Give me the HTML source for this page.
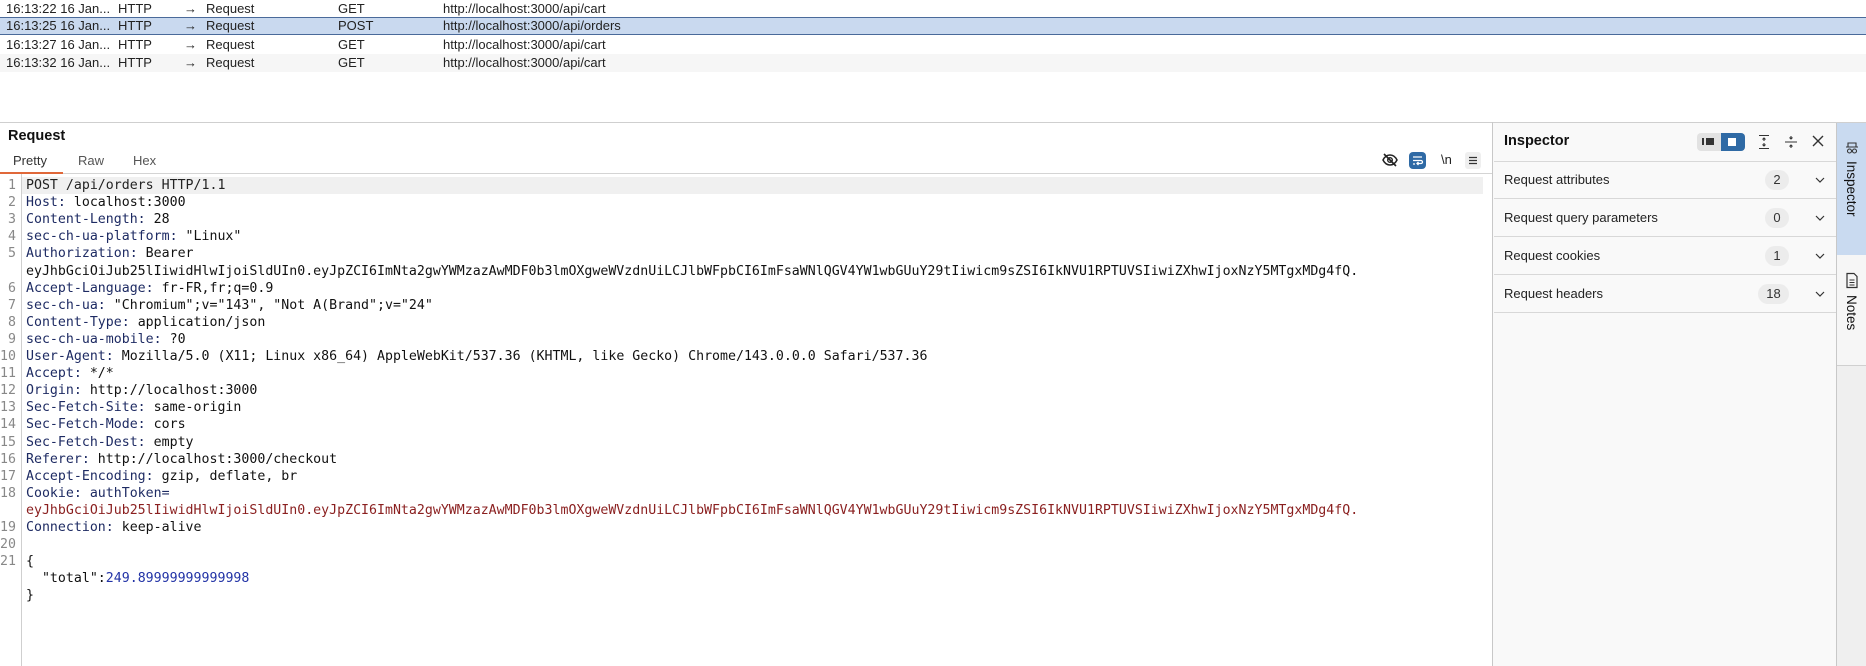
<!DOCTYPE html>
<html><head><meta charset="utf-8"><style>
*{box-sizing:border-box;margin:0;padding:0}
body{width:1866px;height:666px;overflow:hidden;background:#fff;font-family:"Liberation Sans",Arial,sans-serif;position:relative;color:#222}
.row{position:absolute;left:0;width:1866px;height:18px;font-size:13px;line-height:18px}
.row span{position:absolute;top:0}
.sel{background:#c9d9ef;border-top:1px solid #4a6a9a;border-bottom:1px solid #4a6a9a;line-height:16px}
.sel span{top:0}
.code{position:absolute;left:0;top:177px;font-family:"DejaVu Sans Mono","Liberation Mono",monospace;font-size:13.25px;line-height:17.1px;white-space:pre}
.ln{position:absolute;left:0;width:16px;text-align:right;color:#888}
.tx{position:absolute;left:26px}
.h{color:#1e2b63}.r{color:#8a1f1f}.n{color:#2233a6}
.irow{position:absolute;left:1494px;width:343px;height:38px;border-bottom:1px solid #d8d8d8;font-size:13px;line-height:37px}
.irow .t{position:absolute;left:10px}
.badge{position:absolute;left:271px;top:9px;width:24px;height:20px;border-radius:10px;background:#ececec;text-align:center;line-height:20px;font-size:13px;color:#333}
.chev{position:absolute;left:320px;top:10px}
</style></head><body>
<div class="row" style="top:0"><span style="left:6px">16:13:22 16 Jan...</span><span style="left:118px">HTTP</span><span style="left:184px">&#8594;</span><span style="left:206px">Request</span><span style="left:338px">GET</span><span style="left:443px">http://localhost:3000/api/cart</span></div>
<div class="row sel" style="top:17px"><span style="left:6px">16:13:25 16 Jan...</span><span style="left:118px">HTTP</span><span style="left:184px">&#8594;</span><span style="left:206px">Request</span><span style="left:338px">POST</span><span style="left:443px">http://localhost:3000/api/orders</span></div>
<div class="row" style="top:36px"><span style="left:6px">16:13:27 16 Jan...</span><span style="left:118px">HTTP</span><span style="left:184px">&#8594;</span><span style="left:206px">Request</span><span style="left:338px">GET</span><span style="left:443px">http://localhost:3000/api/cart</span></div>
<div class="row" style="top:54px;background:#f6f6f6"><span style="left:6px">16:13:32 16 Jan...</span><span style="left:118px">HTTP</span><span style="left:184px">&#8594;</span><span style="left:206px">Request</span><span style="left:338px">GET</span><span style="left:443px">http://localhost:3000/api/cart</span></div>

<div style="position:absolute;left:0;top:122px;width:1866px;height:1px;background:#cfcfcf"></div>
<div style="position:absolute;left:8px;top:128px;font-size:14.5px;font-weight:bold;color:#111">Request</div>
<div style="position:absolute;left:13px;top:153px;font-size:13px;color:#333">Pretty</div>
<div style="position:absolute;left:78px;top:153px;font-size:13px;color:#555">Raw</div>
<div style="position:absolute;left:133px;top:153px;font-size:13px;color:#555">Hex</div>
<div style="position:absolute;left:0;top:172px;width:63px;height:2px;background:#e0683a"></div>
<div style="position:absolute;left:63px;top:173px;width:1430px;height:1px;background:#d4d4d4"></div>
<div style="position:absolute;left:1492px;top:122px;width:1px;height:544px;background:#c8c8c8"></div>
<div style="position:absolute;left:21px;top:174px;width:1px;height:492px;background:#cfcfcf"></div>
<div style="position:absolute;left:22px;top:177px;width:1461px;height:17px;background:#f0f0f0"></div>

<svg style="position:absolute;left:1381px;top:152px" width="18" height="16" viewBox="0 0 18 16"><path d="M2 8c2-4 5-5 7-5s5 1 7 5c-2 4-5 5-7 5S4 12 2 8z" fill="none" stroke="#222" stroke-width="1.5"/><circle cx="9" cy="8" r="2.3" fill="none" stroke="#222" stroke-width="1.4"/><path d="M3 2l12 12" stroke="#222" stroke-width="1.6"/></svg>
<div style="position:absolute;left:1409px;top:152px;width:17px;height:17px;border-radius:4px;background:#2f6aa5"></div>
<svg style="position:absolute;left:1409px;top:152px" width="17" height="17" viewBox="0 0 17 17"><path d="M4 5h9M4 8.5h8a1.5 1.5 0 010 3H8M9.5 10l-1.5 1.5 1.5 1.5M4 12h2" fill="none" stroke="#fff" stroke-width="1.3"/></svg>
<div style="position:absolute;left:1441px;top:152px;font-size:13px;font-family:'Liberation Sans',sans-serif;color:#222">\n</div>
<div style="position:absolute;left:1465px;top:152px;width:16px;height:17px;border-radius:3px;background:#efefef"></div>
<svg style="position:absolute;left:1465px;top:152px" width="16" height="17" viewBox="0 0 16 17"><path d="M4 5.5h8M4 8.5h8M4 11.5h8" stroke="#333" stroke-width="1.2"/></svg>

<div class="code">
<span class="ln" style="top:0">1</span><span class="tx" style="top:0">POST /api/orders HTTP/1.1</span>
<span class="ln" style="top:17.1px">2</span><span class="tx h" style="top:17.1px">Host: <span style="color:#111">localhost:3000</span></span>
<span class="ln" style="top:34.2px">3</span><span class="tx h" style="top:34.2px">Content-Length: <span style="color:#111">28</span></span>
<span class="ln" style="top:51.3px">4</span><span class="tx h" style="top:51.3px">sec-ch-ua-platform: <span style="color:#111">"Linux"</span></span>
<span class="ln" style="top:68.4px">5</span><span class="tx h" style="top:68.4px">Authorization: <span style="color:#111">Bearer</span></span>
<span class="tx" style="top:85.5px;color:#111">eyJhbGciOiJub25lIiwidHlwIjoiSldUIn0.eyJpZCI6ImNta2gwYWMzazAwMDF0b3lmOXgweWVzdnUiLCJlbWFpbCI6ImFsaWNlQGV4YW1wbGUuY29tIiwicm9sZSI6IkNVU1RPTUVSIiwiZXhwIjoxNzY5MTgxMDg4fQ.</span>
<span class="ln" style="top:102.6px">6</span><span class="tx h" style="top:102.6px">Accept-Language: <span style="color:#111">fr-FR,fr;q=0.9</span></span>
<span class="ln" style="top:119.7px">7</span><span class="tx h" style="top:119.7px">sec-ch-ua: <span style="color:#111">"Chromium";v="143", "Not A(Brand";v="24"</span></span>
<span class="ln" style="top:136.8px">8</span><span class="tx h" style="top:136.8px">Content-Type: <span style="color:#111">application/json</span></span>
<span class="ln" style="top:153.9px">9</span><span class="tx h" style="top:153.9px">sec-ch-ua-mobile: <span style="color:#111">?0</span></span>
<span class="ln" style="top:171px">10</span><span class="tx h" style="top:171px">User-Agent: <span style="color:#111">Mozilla/5.0 (X11; Linux x86_64) AppleWebKit/537.36 (KHTML, like Gecko) Chrome/143.0.0.0 Safari/537.36</span></span>
<span class="ln" style="top:188.1px">11</span><span class="tx h" style="top:188.1px">Accept: <span style="color:#111">*/*</span></span>
<span class="ln" style="top:205.2px">12</span><span class="tx h" style="top:205.2px">Origin: <span style="color:#111">http://localhost:3000</span></span>
<span class="ln" style="top:222.3px">13</span><span class="tx h" style="top:222.3px">Sec-Fetch-Site: <span style="color:#111">same-origin</span></span>
<span class="ln" style="top:239.4px">14</span><span class="tx h" style="top:239.4px">Sec-Fetch-Mode: <span style="color:#111">cors</span></span>
<span class="ln" style="top:256.5px">15</span><span class="tx h" style="top:256.5px">Sec-Fetch-Dest: <span style="color:#111">empty</span></span>
<span class="ln" style="top:273.6px">16</span><span class="tx h" style="top:273.6px">Referer: <span style="color:#111">http://localhost:3000/checkout</span></span>
<span class="ln" style="top:290.7px">17</span><span class="tx h" style="top:290.7px">Accept-Encoding: <span style="color:#111">gzip, deflate, br</span></span>
<span class="ln" style="top:307.8px">18</span><span class="tx h" style="top:307.8px">Cookie: authToken=</span>
<span class="tx r" style="top:324.9px">eyJhbGciOiJub25lIiwidHlwIjoiSldUIn0.eyJpZCI6ImNta2gwYWMzazAwMDF0b3lmOXgweWVzdnUiLCJlbWFpbCI6ImFsaWNlQGV4YW1wbGUuY29tIiwicm9sZSI6IkNVU1RPTUVSIiwiZXhwIjoxNzY5MTgxMDg4fQ.</span>
<span class="ln" style="top:342px">19</span><span class="tx h" style="top:342px">Connection: <span style="color:#111">keep-alive</span></span>
<span class="ln" style="top:359.1px">20</span>
<span class="ln" style="top:376.2px">21</span><span class="tx" style="top:376.2px;color:#111">{</span>
<span class="tx" style="top:393.3px;color:#111">  "total":<span class="n">249.89999999999998</span></span>
<span class="tx" style="top:410.4px;color:#111">}</span>
</div>

<div style="position:absolute;left:1493px;top:123px;width:344px;height:543px;background:#f9f9f9"></div>
<div style="position:absolute;left:1504px;top:133px;font-size:14.5px;font-weight:bold;color:#111">Inspector</div>
<div style="position:absolute;left:1494px;top:161px;width:343px;height:1px;background:#d8d8d8"></div>
<div style="position:absolute;left:1697px;top:133px;width:48px;height:18px;border-radius:4px;background:#e2e2e2"></div>
<div style="position:absolute;left:1721px;top:133px;width:24px;height:18px;border-radius:0 4px 4px 0;background:#2f6aa5"></div>
<div style="position:absolute;left:1704px;top:138px;width:10px;height:7px;background:#333;border-left:2px solid #e2e2e2;box-shadow:-2px 0 0 #333"></div>
<div style="position:absolute;left:1728px;top:138px;width:10px;height:8px;background:#fff;border-right:2px solid #2f6aa5"></div>
<svg style="position:absolute;left:1756px;top:133px" width="16" height="18" viewBox="0 0 16 18"><path d="M3 2.5h10M3 15.5h10M8 5v3M6.5 6.5L8 5l1.5 1.5M8 13v-3M6.5 11.5L8 13l1.5-1.5" fill="none" stroke="#333" stroke-width="1.1"/></svg>
<svg style="position:absolute;left:1783px;top:133px" width="16" height="18" viewBox="0 0 16 18"><path d="M2 9h12M8 3v3M6.5 4.5L8 6l1.5-1.5M8 15v-3M6.5 13.5L8 12l1.5 1.5" fill="none" stroke="#333" stroke-width="1.1"/></svg>
<svg style="position:absolute;left:1811px;top:134px" width="14" height="14" viewBox="0 0 14 14"><path d="M2 2l10 10M12 2L2 12" stroke="#333" stroke-width="1.4"/></svg>

<div class="irow" style="top:161px"><span class="t">Request attributes</span><div class="badge">2</div><svg class="chev" width="12" height="18" viewBox="0 0 12 18"><path d="M2 7l4 4 4-4" fill="none" stroke="#333" stroke-width="1.2"/></svg></div>
<div class="irow" style="top:199px"><span class="t">Request query parameters</span><div class="badge">0</div><svg class="chev" width="12" height="18" viewBox="0 0 12 18"><path d="M2 7l4 4 4-4" fill="none" stroke="#333" stroke-width="1.2"/></svg></div>
<div class="irow" style="top:237px"><span class="t">Request cookies</span><div class="badge">1</div><svg class="chev" width="12" height="18" viewBox="0 0 12 18"><path d="M2 7l4 4 4-4" fill="none" stroke="#333" stroke-width="1.2"/></svg></div>
<div class="irow" style="top:275px"><span class="t">Request headers</span><div class="badge" style="left:264px;width:31px">18</div><svg class="chev" width="12" height="18" viewBox="0 0 12 18"><path d="M2 7l4 4 4-4" fill="none" stroke="#333" stroke-width="1.2"/></svg></div>

<div style="position:absolute;left:1836px;top:123px;width:1px;height:543px;background:#c8c8c8"></div>
<div style="position:absolute;left:1837px;top:123px;width:29px;height:543px;background:#efefef"></div>
<div style="position:absolute;left:1837px;top:123px;width:29px;height:132px;background:#c9daf0"></div>
<div style="position:absolute;left:1837px;top:255px;width:29px;height:111px;background:#f6f6f6;border-bottom:1px solid #d0d0d0"></div>
<svg style="position:absolute;left:1844px;top:140px" width="16" height="16" viewBox="0 0 16 16"><path d="M4 7V3h8v4M2 7h12" fill="none" stroke="#333" stroke-width="1.1"/><circle cx="5.5" cy="11" r="2" fill="none" stroke="#333" stroke-width="1.1"/><circle cx="10.5" cy="11" r="2" fill="none" stroke="#333" stroke-width="1.1"/></svg>
<div style="position:absolute;left:1844px;top:161px;font-size:13.5px;color:#111;writing-mode:vertical-rl">Inspector</div>
<svg style="position:absolute;left:1844px;top:272px" width="16" height="17" viewBox="0 0 16 17"><path d="M3 1.5h7l3 3v11H3z" fill="none" stroke="#333" stroke-width="1.2"/><path d="M5.5 8h5M5.5 10.5h5M5.5 13h5" stroke="#333" stroke-width="1"/></svg>
<div style="position:absolute;left:1844px;top:295px;font-size:13.5px;color:#111;writing-mode:vertical-rl">Notes</div>
</body></html>
